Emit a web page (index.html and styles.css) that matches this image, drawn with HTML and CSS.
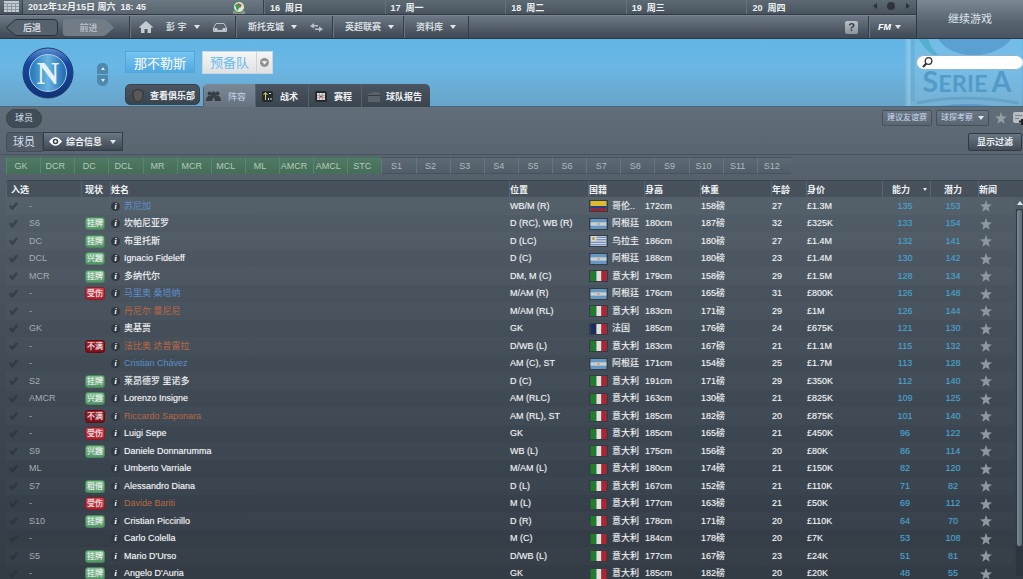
FILE: index.html
```html
<!DOCTYPE html>
<html lang="zh-CN">
<head>
  <meta charset="UTF-8">
  <title>那不勒斯 预备队</title>
  <link rel="stylesheet" href="styles.css">
</head>
<body>
<!-- Shared icons -->
<svg class="defs" aria-hidden="true">
  <symbol id="star" viewBox="0 0 12 12"><path d="M6 0l1.5 4.200 4.500.2-3.500 2.800 1.200 4.500L6 9.200l-3.700 2.500 1.200-4.500L0 4.400l4.500-.2z" fill="currentColor"/></symbol>
  <symbol id="co" viewBox="0 0 19 12"><path fill="#e0bb2c" d="M0 0h19v6H0z"/><path fill="#233f88" d="M0 6h19v3H0z"/><path fill="#a8202b" d="M0 9h19v3H0z"/></symbol>
  <symbol id="ar" viewBox="0 0 19 12"><path fill="#6698c4" d="M0 0h19v12H0z"/><path fill="#c9cfd2" d="M0 4h19v4H0z"/><circle cx="9.5" cy="6" r="1.4" fill="#d3a064"/></symbol>
  <symbol id="uy" viewBox="0 0 19 12"><path fill="#d3d9de" d="M0 0h19v12H0z"/><path stroke="#4266a8" d="M7 1.5h12M7 4.500h12M0 7.500h19M0 10.500h19"/><circle cx="3.500" cy="3" r="1.800" fill="#b9973b"/></symbol>
  <symbol id="it" viewBox="0 0 19 12"><path fill="#1d7d2b" d="M0 0h7v12H0z"/><path fill="#dfe1e0" d="M7 0h6v12H7z"/><path fill="#b3232f" d="M13 0h6v12h-6z"/></symbol>
  <symbol id="fr" viewBox="0 0 19 12"><path fill="#1c2c5c" d="M0 0h7v12H0z"/><path fill="#dfe1e0" d="M7 0h6v12H7z"/><path fill="#b3232f" d="M13 0h6v12h-6z"/></symbol>
</svg>

<header class="topbar">
  <div class="bars">
    <div class="datebar">
      <button class="cal" aria-label="日历">
        <svg width="15" height="11" viewBox="0 0 15 11"><path fill="#c3cad0" d="M0 0h15v11H0z"/><path stroke="#8d979f" d="M0 2.500h15M0 5.500h15M0 8.500h15M3.500 2v9M7.500 2v9M11.500 2v9"/></svg>
      </button>
      <div class="today">
        <span>2012年12月15日 周六&nbsp; 18: 45</span>
        <svg width="14" height="14" viewBox="0 0 14 14"><path d="M1 13V10h12v3z" fill="#8c9284"/><circle cx="7" cy="6" r="5.500" fill="#dfe8e0" stroke="#3e8460"/><path d="M3 4l4-2 1 4-3 4z" fill="#36a04c"/><path d="M6 2l4 2-2 3z" fill="#d2423d"/></svg>
      </div>
      <div class="day">16&nbsp; 周日</div>
      <div class="day">17&nbsp; 周一</div>
      <div class="day">18&nbsp; 周二</div>
      <div class="day">19&nbsp; 周三</div>
      <div class="day">20&nbsp; 周四</div>
      <div class="daynav">
        <svg width="38" height="8" viewBox="0 0 38 8"><path d="M4 1v6L0 4zM33 1v6l4-3z" fill="#2c343b"/><circle cx="18" cy="4" r="4" fill="#2f3439"/></svg>
      </div>
    </div>
    <nav class="menubar">
      <div class="history">
        <button class="back"><svg width="52" height="17" viewBox="0 0 52 17"><path d="M11 .5h37q3.500 0 3.500 3.500v9q0 3.500-3.500 3.500H11q-2 0-4-2L.5 8.500 7 2.500q2-2 4-2z" fill="#56626e" stroke="#29323b"/></svg><span>后退</span></button>
        <button class="forward"><svg width="51" height="17" viewBox="0 0 51 17"><path d="M3 0h36q3 0 5 2l7 6.500-7 6.500q-2 2-5 2H3q-3 0-3-3V3q0-3 3-3z" fill="#717c87"/></svg><span>前进</span></button>
      </div>
      <div class="menu manager">
        <button aria-label="主页"><svg width="14" height="12" viewBox="0 0 14 12"><path d="M7 0l7 6-1 1-1-.7V12H8.500V8h-3v4H2V6.300L1 7 0 6z" fill="#c4ccd3"/></svg></button>
        <button>彭 宇 <i class="caret"></i></button>
        <button aria-label="收件箱"><svg width="14" height="9" viewBox="0 0 14 9"><path d="M3 .5h8L13.500 5v3.500H.5V5z" fill="#59646f" stroke="#b8c1c9"/><path d="M1 5h3l1 2h4l1-2h3v3.500H1z" fill="#b8c1c9"/></svg></button>
      </div>
      <div class="menu club">
        <button>斯托克城 <i class="caret"></i></button>
        <svg width="13" height="9" viewBox="0 0 13 9"><path d="M4 0v2h4v1.500H4v2L0 3zM9 3.500v2H5V7h4v2l4-3z" fill="#b8c1c9"/></svg>
      </div>
      <div class="menu"><button>英超联赛 <i class="caret"></i></button></div>
      <div class="menu last"><button>资料库 <i class="caret"></i></button></div>
      <button class="help">?</button>
      <button class="fm">FM <i class="caret"></i></button>
    </nav>
  </div>
  <button class="continue">继续游戏</button>
</header>

<section class="club-header">
  <svg class="league" width="119" height="68" viewBox="0 0 119 68" aria-hidden="true">
    <path d="M0 0h119v68H0z" fill="#a0d3ee" opacity=".25"/>
    <path d="M4 0v68" stroke="#a9d4ec" stroke-width="3" opacity=".4"/>
    <path d="M8 0v63" stroke="#4f9ab9" stroke-width="4" opacity=".3"/>
    <path d="M14 0q9 17 29 22Q27 14 24 0z" fill="#3ea9bd" opacity=".6"/>
    <path d="M34 0q9 15 36 17 26-2 38-17z" fill="#5498cd" opacity=".8"/>
    <path d="M12 65q25-5 48-5 30 0 55 5" stroke="#5a9aba" stroke-width="3" fill="none" opacity=".6"/>
    <path d="M34 68q30-4 56 0z" fill="#5498cd"/>
    <text x="18" y="54" class="serie"><tspan class="cap">S</tspan>ERIE<tspan class="cap" dx="4">A</tspan></text>
  </svg>
  <svg class="crest" width="52" height="52" viewBox="0 0 52 52" role="img" aria-label="那不勒斯">
    <defs>
      <linearGradient id="rim" x1="0" y1="0" x2="0" y2="1"><stop offset="0" stop-color="#5e8fd0"/><stop offset=".3" stop-color="#16489d"/><stop offset="1" stop-color="#123276"/></linearGradient>
      <linearGradient id="disc"><stop offset="0" stop-color="#2474ba"/><stop offset=".5" stop-color="#67b4df"/><stop offset="1" stop-color="#1e65b0"/></linearGradient>
    </defs>
    <circle cx="26" cy="26" r="25" fill="url(#rim)" stroke="#1c3d70"/>
    <circle cx="26" cy="26" r="18.500" fill="url(#disc)" stroke="#a9cfea"/>
    <text x="26" y="37" text-anchor="middle" class="crest-n">N</text>
  </svg>
  <div class="stepper">
    <button aria-label="上一队"><i class="caret up"></i></button>
    <button aria-label="下一队"><i class="caret"></i></button>
  </div>
  <div class="club-main">
    <div class="titles">
      <h1>那不勒斯</h1>
      <div class="squad">
        <select aria-label="球队"><option>预备队</option></select>
        <span class="round"><svg width="9" height="9" viewBox="0 0 9 9"><circle cx="4.500" cy="4.500" r="4.500" fill="#929494"/><path d="M2 3.300h5L4.500 6.500z" fill="#fff"/></svg></span>
      </div>
    </div>
    <div class="tabs">
      <button class="tab view"><svg width="12" height="13" viewBox="0 0 12 13"><path d="M1 2q3 0 5-2 2 2 5 2v4q0 5-5 7-5-2-5-7z" fill="#595855" stroke="#2c3034"/></svg>查看俱乐部</button>
      <div class="tabgroup">
        <button class="tab active"><svg width="15" height="11" viewBox="0 0 15 11"><g fill="#363d45"><circle cx="3.500" cy="2.500" r="2"/><circle cx="11.500" cy="2.500" r="2"/><circle cx="7.500" cy="3" r="2.500"/><path d="M0 10q0-5 4-5.500h7q4 .5 4 5.500H9L7.500 6 6 10z"/></g></svg>阵容</button>
        <button class="tab tactics"><svg width="11" height="11" viewBox="0 0 11 11"><rect width="11" height="11" rx="2" fill="#252a2f"/><path d="M3.500 9V2M1.500 4l2-2.500 2 2.500" stroke="#ddd34b" fill="none"/><path d="M7 2h2v1H7zM6 7h1v2H6zM8.500 7h1v2h-1z" fill="#ddd"/></svg>战术</button>
        <button class="tab fixtures"><svg width="12" height="11" viewBox="0 0 12 11"><rect width="12" height="11" rx="2" fill="#252a2f"/><path fill="#d8d8d8" d="M2 2h8v7H2z"/><path d="M2 4.500h8M2 6.500h8M4.500 2v7M7.500 2v7" stroke="#888" stroke-width=".6"/><path fill="#c33" d="M5 5h2v1H5z"/></svg>赛程</button>
        <button class="tab report"><svg width="12" height="10" viewBox="0 0 12 10"><path d="M0 2l1-1h3l1-1h6l1 2v8H0z" fill="#596169"/><path d="M0 3.500h12" stroke="#343b42"/></svg>球队报告</button>
      </div>
    </div>
  </div>
  <label class="search">
    <svg width="11" height="11" viewBox="0 0 11 11"><circle cx="6.500" cy="4" r="3.300" fill="none" stroke="#333" stroke-width="1.300"/><path d="M4.300 6.500L1 10" stroke="#333" stroke-width="2"/></svg>
    <input type="text" aria-label="搜索">
  </label>
</section>

<main class="content">
  <div class="crumbs">
    <span class="pill">球员</span>
    <div class="actions">
      <button class="small">建议友谊赛</button>
      <button class="small scout">球探考察 <i class="caret"></i></button>
      <button class="icon" aria-label="收藏"><svg width="12" height="12"><use href="#star"/></svg></button>
      <button class="icon note" aria-label="备注"><svg width="10" height="13" viewBox="0 0 10 13"><rect width="14" height="11" rx="2" fill="#b7bdc1"/><path d="M2 3.500h7M2 6.500h4" stroke="#7d868e"/><path d="M6 9.500h5M9 7v6" stroke="#20262c" stroke-width="2"/></svg></button>
    </div>
  </div>
  <div class="toolbar">
    <h2>球员</h2>
    <div class="view-select">
      <svg width="13" height="9" viewBox="0 0 13 9"><path d="M0 4.500Q6.500-4 13 4.500 6.500 13 0 4.500z" fill="#fff"/><circle cx="6.500" cy="4.500" r="2.800" fill="#3a4550"/><circle cx="6.500" cy="4.500" r="1.200" fill="#fff"/></svg>
      <select aria-label="视图"><option>综合信息</option></select>
      <i class="caret"></i>
    </div>
    <button class="filter">显示过滤</button>
  </div>

  <div class="positions" id="positions"></div>

  <div class="list">
    <table>
      <thead>
        <tr>
          <th class="c-pick">入选</th>
          <th class="c-status">现状</th>
          <th class="c-name">姓名</th>
          <th class="c-pos">位置</th>
          <th class="c-nation">国籍</th>
          <th class="c-height">身高</th>
          <th class="c-weight">体重</th>
          <th class="c-age">年龄</th>
          <th class="c-value">身价</th>
          <th class="c-ability">能力 <i class="caret"></i></th>
          <th class="c-potential">潜力</th>
          <th class="c-news">新闻</th>
        </tr>
      </thead>
      <tbody id="players"></tbody>
    </table>
    <div class="scrollbar">
      <div class="scroll-head"></div>
      <i class="caret up"></i>
      <div class="track"><div class="thumb"></div></div>
    </div>
  </div>
</main>
<script src="script.js"></script>
</body>
</html>
```

FILE: styles.css
```css
* {
  box-sizing: border-box;
}

body {
  margin: 0;
  height: 100vh;
  overflow: hidden;
  display: flex;
  flex-direction: column;
  font-family: "Liberation Sans", "Noto Sans CJK SC", sans-serif;
  font-size: 9px;
  line-height: 12px;
  color: #eef1f3;
  background: #353d46;
}

button,
input,
select {
  font: inherit;
  color: inherit;
  margin: 0;
  padding: 0;
  border: 0;
  background: none;
}

select {
  appearance: none;
  outline: none;
}

h1,
h2 {
  margin: 0;
  font-weight: normal;
}

svg {
  display: block;
  flex: none;
}

.defs {
  position: absolute;
  width: 0;
  height: 0;
}

.caret {
  display: inline-block;
  flex: none;
  border: 3px solid transparent;
  border-top: 4px solid #e3e7ea;
  border-bottom: 0;
}

.caret.up {
  border-top: 0;
  border-bottom: 4px solid #e3e7ea;
}

/* Top bars */
.topbar {
  display: flex;
  flex: none;
  border-bottom: 1px solid #2e3842;
  font-weight: bold;
}

.bars {
  flex: 1;
}

.datebar {
  display: flex;
  height: 15px;
  background: linear-gradient(#5c6872, #48535e);
  border-bottom: 1px solid #303a44;
}

.cal {
  display: flex;
  justify-content: center;
  width: 23px;
  padding-top: 1px;
  border-right: 1px solid #36414b;
}

.today {
  display: flex;
  justify-content: space-between;
  width: 241px;
  padding: 1px 17px 0 5px;
  background: linear-gradient(#6b7781, #58646f);
  border-right: 1px solid #36414b;
}

.day {
  flex: 1;
  padding: 2px 0 0 5px;
  border-left: 1px solid #65717c;
}

.daynav {
  width: 49px;
  padding: 2px 0 0 6px;
}

.menubar {
  display: flex;
  align-items: center;
  height: 23px;
  background: linear-gradient(#6c7885, #46515c 80%, #3f4a54);
  border-top: 1px solid #7b8590;
  color: #d5dade;
}

.history {
  display: flex;
  gap: 5px;
  width: 129px;
  padding-left: 6px;
}

.history button {
  display: grid;
  align-items: center;
  justify-items: center;
}

.history svg,
.history span {
  grid-area: 1 / 1;
}

.history span {
  padding-top: 2px;
}

.history .forward {
  color: #b3bac1;
}

.menu {
  display: flex;
  align-items: center;
  align-self: stretch;
  padding: 0 9px 0 12px;
  border-left: 1px solid #333e48;
  box-shadow: inset 1px 0 #697580;
}

.menu button {
  display: flex;
  align-items: center;
  gap: 7px;
}

.manager {
  gap: 13px;
  width: 106px;
  padding: 0 0 0 9px;
}

.club {
  gap: 13px;
}

.last {
  padding-right: 12px;
  border-right: 1px solid #333e48;
}

.help {
  width: 13px;
  height: 13px;
  margin-left: auto;
  margin-right: 10px;
  border-radius: 2px;
  background: linear-gradient(#bac1c7, #8b959d);
  color: #384149;
  font-size: 11px;
}

.fm {
  display: flex;
  align-items: center;
  gap: 4px;
  align-self: stretch;
  width: 48px;
  padding-left: 9px;
  border-left: 1px solid #333e48;
  box-shadow: inset 1px 0 #697580;
  font-style: italic;
  color: #fff;
}

.continue {
  width: 107px;
  border-left: 1px solid #303a44;
  background: linear-gradient(#7b8893, #56636e 60%, #48545f);
  color: #dce4f0;
  font-size: 11px;
  font-weight: normal;
}

/* Club header */
.club-header {
  position: relative;
  display: flex;
  align-items: flex-start;
  flex: none;
  height: 68px;
  padding-left: 22px;
  background: linear-gradient(#62b5e4, #6ab7e5 40%, #69a4c9);
  border-bottom: 1px solid #48677e;
}

.league {
  position: absolute;
  right: 0;
  top: 0;
  height: 67px;
}

.serie {
  font-family: "Lato", sans-serif;
  font-size: 24px;
  font-weight: bold;
  fill: #529bc9;
}

.cap {
  font-size: 29px;
}

.crest {
  margin-top: 8px;
}

.crest-n {
  font-family: "Liberation Serif", serif;
  font-size: 31px;
  font-weight: bold;
  fill: #e5f2f8;
}

.stepper {
  display: flex;
  flex-direction: column;
  gap: 1px;
  margin: 24px 17px 0 23px;
}

.stepper button {
  display: flex;
  align-items: center;
  justify-content: center;
  width: 11px;
  height: 11px;
  border-radius: 5px 5px 0 0;
  background: #4d89ac;
}

.stepper button + button {
  border-radius: 0 0 5px 5px;
}

.stepper .caret {
  border-left-width: 2px;
  border-right-width: 2px;
  border-top-width: 3px;
}

.stepper .up {
  border-top-width: 0;
  border-bottom-width: 3px;
}

.club-main {
  flex: 1;
  padding-top: 12px;
}

.titles {
  display: flex;
  gap: 7px;
  height: 33px;
}

h1 {
  height: 22px;
  padding: 2px 8px;
  border: 1px solid #57a4d6;
  background: linear-gradient(#76c5f2, #51a9e0);
  font-size: 13px;
  line-height: 19px;
  color: #fff;
}

.squad {
  display: flex;
  height: 23px;
  border: 1px solid #c5d7e2;
  background: linear-gradient(#f5f5f5, #e0e1e2);
}

.squad select {
  width: 53px;
  padding-left: 7px;
  font-size: 13px;
  color: #67bdf1;
}

.round {
  display: flex;
  align-items: center;
  justify-content: center;
  width: 16px;
  border-left: 1px solid #d1d4d6;
}

.tabs {
  display: flex;
  gap: 3px;
  font-weight: bold;
}

.tabgroup {
  display: flex;
  border-radius: 5px 5px 0 0;
  overflow: hidden;
}

.tab {
  display: flex;
  align-items: center;
  height: 23px;
  padding-top: 2px;
  background: linear-gradient(#4a5561, #3a444e);
  border-left: 1px solid #56616c;
}

.view {
  gap: 6px;
  width: 75px;
  height: 21px;
  padding-left: 6px;
  border: 1px solid #37424c;
  border-radius: 5px;
}

.active {
  gap: 7px;
  width: 52px;
  padding-left: 2px;
  background: linear-gradient(#7b8896, #66727f);
  color: #c3d3e8;
  font-weight: normal;
}

.tactics,
.fixtures {
  gap: 7px;
  width: 53px;
  padding-left: 6px;
}

.report {
  gap: 6px;
  width: 69px;
  padding-left: 6px;
}

.search {
  position: absolute;
  right: 0;
  top: 16px;
  display: flex;
  align-items: center;
  width: 107px;
  height: 15px;
  padding-left: 5px;
  border: 1px solid #8cb7ce;
  border-right: 0;
  border-radius: 8px;
  background: #fff;
}

.search input {
  flex: 1;
  min-width: 0;
  outline: none;
  color: #333;
}

/* Content */
.content {
  flex: 1;
  min-height: 0;
  display: flex;
  flex-direction: column;
  background: linear-gradient(#616d79, #525e69 18%, #434d57 50%, #38424c 80%, #333b44);
}

.crumbs {
  display: flex;
  align-items: center;
  justify-content: space-between;
  height: 22px;
  padding-left: 6px;
}

.pill {
  padding: 2px 8px 3px;
  border: 1px solid #3d4751;
  border-radius: 9px;
  background: #414c57;
  color: #d4dfec;
}

.actions {
  display: flex;
  align-items: center;
  gap: 4px;
}

.small {
  display: flex;
  align-items: center;
  gap: 5px;
  height: 16px;
  padding: 0 4px;
  border: 1px solid #46515c;
  border-radius: 2px;
  background: linear-gradient(#6a7683, #5a6672);
  color: #c9dbf1;
  font-size: 8px;
}

.icon {
  margin-left: 2px;
  color: #949da4;
}

.toolbar {
  display: flex;
  align-items: center;
  height: 26px;
  padding: 0 1px 0 6px;
  border-bottom: 1px solid #49545e;
}

h2 {
  width: 37px;
  height: 20px;
  padding-left: 6px;
  border: 1px solid #434e58;
  border-radius: 3px 0 0 3px;
  background: #505b66;
  color: #d4dfec;
  font-size: 11px;
  line-height: 18px;
}

.view-select {
  display: flex;
  align-items: center;
  width: 80px;
  height: 19px;
  padding: 0 6px 0 5px;
  border: 1px solid #343e48;
  background: linear-gradient(#6b7784, #3d4853);
  font-weight: bold;
}

.view-select select {
  flex: 1;
  min-width: 0;
  padding-left: 4px;
}

.filter {
  width: 54px;
  height: 18px;
  margin-left: auto;
  border: 1px solid #303a43;
  border-radius: 2px;
  background: linear-gradient(#697582, #424d57);
  font-weight: bold;
}

.positions {
  display: flex;
  flex: none;
  max-width: 785px;
  height: 17px;
  margin: 2px 0 6px 6px;
}

.positions button {
  flex: 1 1 0;
  min-width: 0;
  padding-right: 5px;
  border: 1px solid #48535e;
  border-left-color: #66727d;
  border-right: 0;
  background: linear-gradient(#5d6975, #515d68);
  color: #b1b9bf;
}

.positions .on {
  border-color: #47705b;
  border-left-color: #568670;
  background: linear-gradient(#507a66, #456e57);
  color: #b3c9b9;
}

/* Player list */
.list {
  display: flex;
  flex: 1;
  min-height: 0;
  padding-left: 6px;
  overflow: hidden;
}

table {
  flex: 1;
  width: 100%;
  align-self: flex-start;
  table-layout: fixed;
  border-collapse: separate;
  border-spacing: 0;
}

th {
  height: 17px;
  padding: 1px 0 0 1px;
  background: #47515b;
  border-top: 1px solid #3c464f;
  box-shadow: inset 1px 0 #59646e;
  text-align: left;
  white-space: nowrap;
}

th:first-child {
  padding-left: 5px;
  border-radius: 3px 0 0 0;
}

.c-pick {
  width: 75px;
}

.c-status {
  width: 29px;
}

th.c-status {
  padding-left: 4px;
}

.c-pos {
  width: 79px;
}

.c-nation,
.c-height {
  width: 56px;
}

.c-weight {
  width: 71px;
}

.c-age {
  width: 35px;
}

.c-value {
  width: 76px;
}

.c-ability,
.c-potential {
  width: 48px;
}

.c-news {
  width: 36px;
}

th.c-ability {
  padding-left: 10px;
}

th.c-potential {
  padding-left: 14px;
}

.c-ability .caret {
  margin-left: 10px;
  border-left-width: 2px;
  border-right-width: 2px;
  border-top-width: 3px;
  vertical-align: 2px;
}

td {
  height: 18px;
  padding: 0 0 0 1px;
  line-height: 17px;
  text-shadow: 0 0 1px rgba(255, 255, 255, 0.45);
  white-space: nowrap;
  overflow: hidden;
}

tr:nth-child(even) td {
  height: 17px;
}

tr:nth-child(odd) td {
  background: rgba(255, 255, 255, 0.02);
}

.pick,
.name,
.nation {
  display: flex;
  align-items: center;
  height: 17px;
}

.pick {
  gap: 11px;
  padding-left: 2px;
  color: #a5acb2;
  text-shadow: none;
}

.pick input {
  appearance: none;
  width: 9px;
  height: 8px;
  background: rgba(35, 43, 51, 0.5);
  clip-path: polygon(0 55%, 20% 35%, 38% 55%, 80% 0, 100% 20%, 45% 100%, 30% 100%);
}

.badge {
  display: block;
  width: 20px;
  height: 13px;
  margin: 2px 0 2px 3px;
  border: 1px solid #46875a;
  border-radius: 3px;
  background: linear-gradient(#7cbd8b, #559467);
  font-size: 8px;
  line-height: 11px;
  text-align: center;
}

.badge.hurt {
  border-color: #8f1c25;
  background: linear-gradient(#d04249, #a9222d);
}

.badge.unhappy {
  border-color: #5c1016;
  background: linear-gradient(#a51f27, #7d1017);
}

.name {
  gap: 4px;
  color: #f3f5f6;
}

.name a {
  color: inherit;
  text-decoration: none;
}

.info {
  width: 9px;
  height: 9px;
  border-radius: 50%;
  background: #303840;
  color: #fff;
  font: italic bold 8px/9px "Liberation Serif", serif;
  text-align: center;
}

.name.blue {
  color: #5d8dcb;
  text-shadow: none;
}

.name.orange {
  color: #bb6844;
  text-shadow: none;
}

.nation {
  gap: 4px;
}

.nation svg {
  border: 1px solid #343d45;
}

td.c-ability,
td.c-potential {
  padding-right: 3px;
  color: #4ba0ca;
  text-align: center;
  text-shadow: 0 0 1px rgba(75, 160, 202, 0.5);
}

td.c-news {
  padding-left: 2px;
  color: #8f989f;
}

.scrollbar {
  display: flex;
  flex-direction: column;
  align-items: flex-end;
  width: 9px;
}

.scroll-head {
  align-self: stretch;
  height: 17px;
  background: #47515b;
  border-top: 1px solid #3c464f;
}

.scrollbar .up {
  margin: 4px 0;
}

.track {
  flex: 1;
  width: 7px;
  margin-bottom: 3px;
  background: rgba(35, 43, 51, 0.4);
}

.thumb {
  height: 92%;
  border: 1px solid #2f3942;
  border-radius: 3px;
  background: linear-gradient(90deg, #7c8a99, #5b6876);
}
```

FILE: script.js
```js
const positions = ['GK', 'DCR', 'DC', 'DCL', 'MR', 'MCR', 'MCL', 'ML', 'AMCR', 'AMCL', 'STC',
  'S1', 'S2', 'S3', 'S4', 'S5', 'S6', 'S7', 'S8', 'S9', 'S10', 'S11', 'S12'];

const nations = { co: '哥伦..', ar: '阿根廷', uy: '乌拉圭', it: '意大利', fr: '法国' };
const badges = { '受伤': 'hurt', '不满': 'unhappy' };

// pick, status, name, name colour, position, nation, height, weight, age, value, ability, potential
const players = [
  ['-', '', '苏尼加', 'blue', 'WB/M (R)', 'co', 172, 158, 27, '1.3M', 135, 153],
  ['S6', '挂牌', '坎帕尼亚罗', '', 'D (RC), WB (R)', 'ar', 180, 187, 32, '325K', 133, 154],
  ['DC', '挂牌', '布里托斯', '', 'D (LC)', 'uy', 186, 180, 27, '1.4M', 132, 141],
  ['DCL', '兴趣', 'Ignacio Fideleff', '', 'D (C)', 'ar', 188, 180, 23, '1.4M', 130, 142],
  ['MCR', '挂牌', '多纳代尔', '', 'DM, M (C)', 'it', 179, 158, 29, '1.5M', 128, 134],
  ['-', '受伤', '马里奥 桑塔纳', 'blue', 'M/AM (R)', 'ar', 176, 165, 31, '800K', 126, 148],
  ['-', '', '丹尼尔 曼尼尼', 'orange', 'M/AM (RL)', 'it', 183, 171, 29, '1M', 126, 144],
  ['GK', '', '奥基贾', '', 'GK', 'fr', 185, 176, 24, '675K', 121, 130],
  ['-', '不满', '法比奥 达普雷拉', 'orange', 'D/WB (L)', 'it', 183, 167, 21, '1.1M', 115, 132],
  ['-', '', 'Cristian Chávez', 'blue', 'AM (C), ST', 'ar', 171, 154, 25, '1.7M', 113, 128],
  ['S2', '挂牌', '莱昂德罗 里诺多', '', 'D (C)', 'it', 191, 171, 29, '350K', 112, 140],
  ['AMCR', '兴趣', 'Lorenzo Insigne', '', 'AM (RLC)', 'it', 163, 130, 21, '825K', 109, 125],
  ['-', '不满', 'Riccardo Saponara', 'orange', 'AM (RL), ST', 'it', 185, 182, 20, '875K', 101, 140],
  ['-', '受伤', 'Luigi Sepe', '', 'GK', 'it', 185, 165, 21, '450K', 96, 122],
  ['S9', '兴趣', 'Daniele Donnarumma', '', 'WB (L)', 'it', 175, 156, 20, '80K', 86, 114],
  ['ML', '', 'Umberto Varriale', '', 'M/AM (L)', 'it', 180, 174, 21, '150K', 82, 120],
  ['S7', '租借', 'Alessandro Diana', '', 'D (L)', 'it', 167, 152, 21, '110K', 71, 82],
  ['-', '受伤', 'Davide Bariti', 'orange', 'M (L)', 'it', 177, 163, 21, '50K', 69, 112],
  ['S10', '挂牌', 'Cristian Piccirillo', '', 'D (R)', 'it', 178, 171, 20, '110K', 64, 70],
  ['-', '', 'Carlo Colella', '', 'M (C)', 'it', 184, 178, 20, '7K', 53, 108],
  ['S5', '挂牌', "Mario D'Urso", '', 'D/WB (L)', 'it', 177, 167, 23, '24K', 51, 81],
  ['-', '挂牌', "Angelo D'Auria", '', 'GK', 'it', 185, 182, 20, '20K', 48, 55]
];

document.getElementById('positions').innerHTML = positions
  .map((p, i) => `<button class="${i < 11 ? 'on' : ''}">${p}</button>`)
  .join('');

document.getElementById('players').innerHTML = players.map(p => {
  const [pick, status, name, color, pos, nation, height, weight, age, value, ability, potential] = p;
  const badge = status ? `<span class="badge ${badges[status] || ''}">${status}</span>` : '';
  return `<tr>
    <td><label class="pick"><input type="checkbox">${pick}</label></td>
    <td>${badge}</td>
    <td><div class="name ${color}"><span class="info">i</span><a href="#">${name}</a></div></td>
    <td>${pos}</td>
    <td><div class="nation"><svg width="19" height="12"><use href="#${nation}"/></svg>${nations[nation]}</div></td>
    <td>${height}cm</td>
    <td>${weight}磅</td>
    <td>${age}</td>
    <td>£${value}</td>
    <td class="c-ability">${ability}</td>
    <td class="c-potential">${potential}</td>
    <td class="c-news"><svg width="12" height="12"><use href="#star"/></svg></td>
  </tr>`;
}).join('');
```
